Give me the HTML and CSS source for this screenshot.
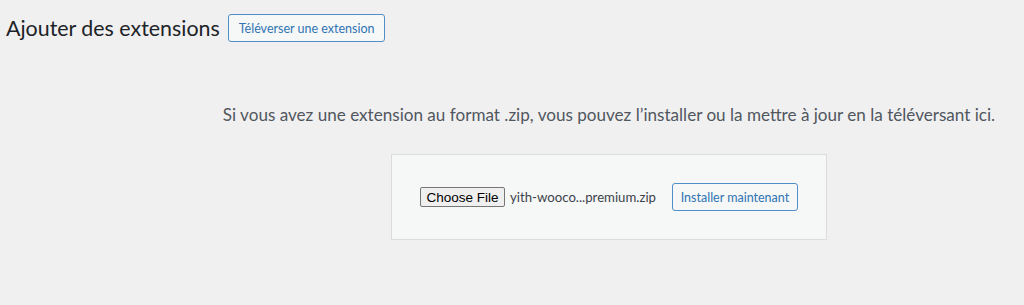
FILE: index.html
```html
<!DOCTYPE html>
<html lang="fr">
<head>
    <meta charset="UTF-8">
    <meta name="viewport" content="width=device-width, initial-scale=1.0">
    <link rel="stylesheet" href="styles.css">
</head>
<body>

<div class="wrap">
    <div class="page-header">
        <h1 class="page-title">Ajouter des extensions</h1>
        <button class="btn-outline">Téléverser une extension</button>
    </div>

    <div class="upload-plugin">
        <p class="install-help">Si vous avez une extension au format .zip, vous pouvez l’installer ou la mettre à jour en la téléversant ici.</p>
        <form class="upload-form">
            <span class="file-field">
                <button type="button" class="file-btn">Choose File</button>
                <span class="file-name">yith-wooco...premium.zip</span>
            </span>
            <button type="button" class="btn-outline btn-install">Installer maintenant</button>
        </form>
    </div>
</div>

</body>
</html>
```

FILE: styles.css
```css
body {
    margin: 0;
    background: #f0f0f1;
    font-family: Lato, "Open Sans", sans-serif;
    color: #1d2327;
}
.wrap {
    padding: 14px 0 0 6px;
}
.page-header {
    display: flex;
    align-items: center;
    gap: 8px;
}
.page-title {
    margin: 0;
    font-size: 21.4px;
    font-weight: 400;
    color: #1d2327;
}
.btn-outline {
    height: 28px;
    padding: 0 10px;
    background: #f6f7f7;
    border: 1px solid #4f8fc7;
    border-radius: 3px;
    color: #2f74b3;
    font-family: inherit;
    font-size: 12.5px;
}
.upload-plugin {
    margin-left: 188px;
    display: flex;
    flex-direction: column;
    align-items: center;
}
.install-help {
    margin: 62px 0 0;
    font-size: 17.1px;
    color: #50575e;
}
.upload-form {
    margin-top: 29px;
    width: 434px;
    height: 84px;
    background: #f6f7f7;
    border: 1px solid #dcdcde;
    display: flex;
    align-items: center;
    justify-content: center;
    gap: 16px;
}
.file-field {
    display: flex;
    align-items: center;
    gap: 5px;
}
.file-btn {
    height: 20px;
    width: 85px;
    padding: 0;
    background: #efefef;
    border: 1px solid #767676;
    border-radius: 2px;
    font-family: "Liberation Sans", Arial, sans-serif;
    font-size: 13.5px;
    color: #000;
}
.file-name {
    font-size: 13.2px;
    color: #3c434a;
}
.btn-install {
    width: 126px;
    padding: 0;
}
```
